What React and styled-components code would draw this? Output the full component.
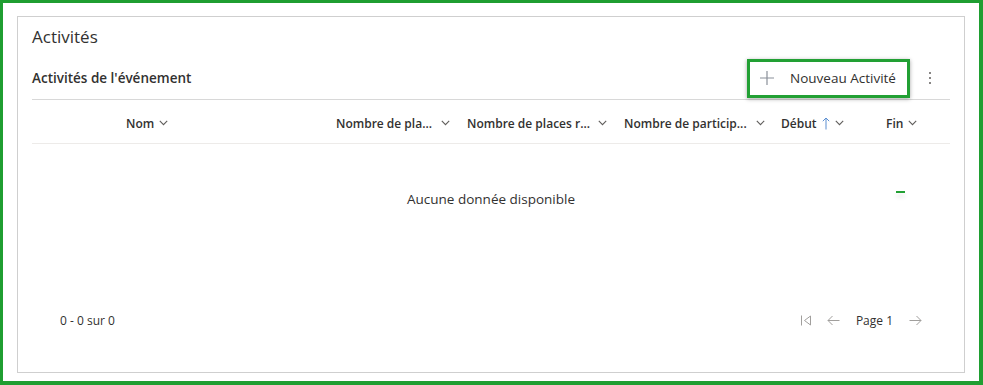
import React from 'react';
import styled, { createGlobalStyle } from 'styled-components';

const GlobalStyle = createGlobalStyle`
  html, body { margin: 0; padding: 0; background: #fff; }
  body { font-family: "Segoe UI", "Open Sans", "Noto Sans", sans-serif; color: #323130; }
  * { box-sizing: border-box; }
`;

const columns = [
  { label: 'Nom', width: 294, pad: 94 },
  { label: 'Nombre de pla...', width: 131, pad: 10, gap: 9 },
  { label: 'Nombre de places r...', width: 157, pad: 10, gap: 8 },
  { label: 'Nombre de particip...', width: 157, pad: 10, gap: 9 },
  { label: 'Début', width: 105, pad: 10, sorted: true },
  { label: 'Fin', width: 74, pad: 10 },
];

const Chevron = () => (
  <svg width="9" height="6" viewBox="0 0 9 6" fill="none">
    <path d="M0.8 0.8 L4.5 4.6 L8.2 0.8" stroke="#605e5c" strokeWidth="1.1" />
  </svg>
);

const SortUp = () => (
  <svg width="8" height="13" viewBox="0 0 8 13" fill="none">
    <path d="M4 12.5 V1 M0.8 4.2 L4 1 L7.2 4.2" stroke="#5c8fd1" strokeWidth="1" />
  </svg>
);

const App = () => {
  return (
    <>
      <GlobalStyle />
      <Frame>
        <Card>
          <Title>Activités</Title>
          <Toolbar>
            <SubTitle>Activités de l'événement</SubTitle>
            <Actions>
              <NewButton>
                <svg width="14" height="14" viewBox="0 0 14 14" fill="none">
                  <path d="M7 0 V14 M0 7 H14" stroke="#8a9099" strokeWidth="1.2" />
                </svg>
                <span>Nouveau Activité</span>
              </NewButton>
              <MoreButton>
                <svg width="4" height="14" viewBox="0 0 4 14">
                  <circle cx="2" cy="2" r="1" fill="#605e5c" />
                  <circle cx="2" cy="7" r="1" fill="#605e5c" />
                  <circle cx="2" cy="12" r="1" fill="#605e5c" />
                </svg>
              </MoreButton>
            </Actions>
          </Toolbar>
          <HeaderRow>
            {columns.map((c) => (
              <HeaderCell key={c.label} $width={c.width} $pad={c.pad} $gap={c.gap}>
                <span>{c.label}</span>
                {c.sorted && <SortUp />}
                <Chevron />
              </HeaderCell>
            ))}
          </HeaderRow>
          <Body>
            <Empty>Aucune donnée disponible</Empty>
          </Body>
          <Footer>
            <Count>0 - 0 sur 0</Count>
            <Pager>
              <PagerIcon>
                <svg width="10" height="11" viewBox="0 0 10 11" fill="none">
                  <path d="M0.5 0.5 V10.5 M9.5 1 L3.5 5.5 L9.5 10 Z" stroke="#a19f9d" strokeWidth="1" />
                </svg>
              </PagerIcon>
              <PagerIcon>
                <svg width="13" height="11" viewBox="0 0 13 11" fill="none">
                  <path d="M12.5 5.5 H1 M5.5 1 L1 5.5 L5.5 10" stroke="#a19f9d" strokeWidth="1" />
                </svg>
              </PagerIcon>
              <PageLabel>Page 1</PageLabel>
              <PagerIcon>
                <svg width="13" height="11" viewBox="0 0 13 11" fill="none">
                  <path d="M0.5 5.5 H12 M7.5 1 L12 5.5 L7.5 10" stroke="#a19f9d" strokeWidth="1" />
                </svg>
              </PagerIcon>
            </Pager>
          </Footer>
          <Marker />
        </Card>
      </Frame>
    </>
  );
};

export default App;

const Frame = styled.div`
  width: 983px;
  height: 385px;
  border: solid #1f9e31;
  border-width: 3px 4px 4px 3px;
  padding: 13px 14px 8px 14px;
  background: #fff;
`;

const Card = styled.div`
  position: relative;
  height: 357px;
  border: 1px solid #cfcfcf;
  padding: 0 14px;
`;

const Title = styled.div`
  padding-top: 8px;
  height: 37px;
  font-size: 17px;
  line-height: 24px;
  color: #323130;
`;

const Toolbar = styled.div`
  display: flex;
  align-items: center;
  justify-content: space-between;
  height: 46px;
  padding-top: 3px;
  border-bottom: 1px solid #d8d8d8;
`;

const SubTitle = styled.div`
  font-size: 13.5px;
  font-weight: 600;
  color: #323130;
`;

const Actions = styled.div`
  display: flex;
  align-items: center;
`;

const NewButton = styled.button`
  display: flex;
  align-items: center;
  gap: 16px;
  width: 163px;
  height: 39px;
  padding: 0 0 0 10px;
  border: 3px solid #22a034;
  background: #fff;
  box-shadow: 0 1px 4px rgba(0, 0, 0, 0.35);
  font-family: inherit;
  font-size: 13.5px;
  color: #323130;
`;

const MoreButton = styled.div`
  width: 40px;
  display: flex;
  justify-content: center;
`;

const HeaderRow = styled.div`
  display: flex;
  height: 44px;
  padding-top: 3px;
  border-bottom: 1px solid #edebe9;
`;

const HeaderCell = styled.div`
  display: flex;
  align-items: center;
  gap: ${(p) => p.$gap || 5}px;
  width: ${(p) => p.$width}px;
  padding-left: ${(p) => p.$pad}px;
  font-size: 12px;
  font-weight: 600;
  color: #323130;
  white-space: nowrap;
`;

const Body = styled.div`
  height: 151px;
  padding-top: 45px;
  display: flex;
  justify-content: center;
`;

const Empty = styled.div`
  font-size: 13.5px;
  line-height: 20px;
  color: #323130;
`;

const Footer = styled.div`
  display: flex;
  align-items: center;
  justify-content: space-between;
  height: 50px;
  padding: 0 28px;
`;

const Count = styled.div`
  font-size: 12px;
  color: #323130;
`;

const Pager = styled.div`
  display: flex;
  align-items: center;
  gap: 16px;
`;

const PagerIcon = styled.div`
  display: flex;
  align-items: center;
`;

const PageLabel = styled.div`
  font-size: 12px;
  color: #323130;
`;

const Marker = styled.div`
  position: absolute;
  left: 878px;
  top: 174px;
  width: 9px;
  height: 2px;
  background: #22a034;
  box-shadow: 0 4px 4px rgba(0, 0, 0, 0.12);
`;
